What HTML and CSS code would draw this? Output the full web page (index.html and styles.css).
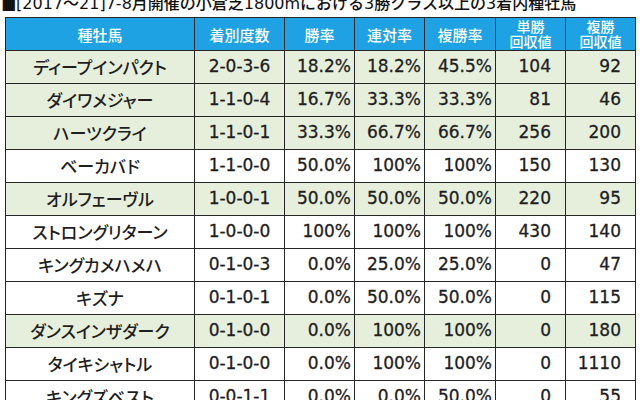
FILE: index.html
```html
<!DOCTYPE html>
<html lang="ja">
<head>
<meta charset="utf-8">
<link rel="stylesheet" href="styles.css">
</head>
<body>
<div class="title">■[2017～21]7-8月開催の小倉芝1800mにおける3勝クラス以上の3着内種牡馬</div>
<table class="stats">
  <colgroup>
    <col class="c-name"><col class="c-rec"><col class="c-rate"><col class="c-rate"><col class="c-rate3"><col class="c-ret"><col class="c-ret2">
  </colgroup>
  <thead>
    <tr>
      <th>種牡馬</th><th>着別度数</th><th>勝率</th><th>連対率</th><th>複勝率</th><th class="two">単勝<br>回収値</th><th class="two">複勝<br>回収値</th>
    </tr>
  </thead>
  <tbody>
    <tr class="hl"><td class="name">ディープインパクト</td><td class="rec">2-0-3-6</td><td>18.2%</td><td>18.2%</td><td>45.5%</td><td class="ret">104</td><td class="ret">92</td></tr>
    <tr class="hl"><td class="name">ダイワメジャー</td><td class="rec">1-1-0-4</td><td>16.7%</td><td>33.3%</td><td>33.3%</td><td class="ret">81</td><td class="ret">46</td></tr>
    <tr class="hl"><td class="name">ハーツクライ</td><td class="rec">1-1-0-1</td><td>33.3%</td><td>66.7%</td><td>66.7%</td><td class="ret">256</td><td class="ret">200</td></tr>
    <tr><td class="name">ベーカバド</td><td class="rec">1-1-0-0</td><td>50.0%</td><td>100%</td><td>100%</td><td class="ret">150</td><td class="ret">130</td></tr>
    <tr class="hl"><td class="name">オルフェーヴル</td><td class="rec">1-0-0-1</td><td>50.0%</td><td>50.0%</td><td>50.0%</td><td class="ret">220</td><td class="ret">95</td></tr>
    <tr><td class="name">ストロングリターン</td><td class="rec">1-0-0-0</td><td>100%</td><td>100%</td><td>100%</td><td class="ret">430</td><td class="ret">140</td></tr>
    <tr><td class="name">キングカメハメハ</td><td class="rec">0-1-0-3</td><td>0.0%</td><td>25.0%</td><td>25.0%</td><td class="ret">0</td><td class="ret">47</td></tr>
    <tr><td class="name">キズナ</td><td class="rec">0-1-0-1</td><td>0.0%</td><td>50.0%</td><td>50.0%</td><td class="ret">0</td><td class="ret">115</td></tr>
    <tr class="hl"><td class="name">ダンスインザダーク</td><td class="rec">0-1-0-0</td><td>0.0%</td><td>100%</td><td>100%</td><td class="ret">0</td><td class="ret">180</td></tr>
    <tr><td class="name">タイキシャトル</td><td class="rec">0-1-0-0</td><td>0.0%</td><td>100%</td><td>100%</td><td class="ret">0</td><td class="ret">1110</td></tr>
    <tr><td class="name">キングズベスト</td><td class="rec">0-0-1-1</td><td>0.0%</td><td>0.0%</td><td>50.0%</td><td class="ret">0</td><td class="ret">55</td></tr>
  </tbody>
</table>
</body>
</html>
```
FILE: styles.css
```css
html, body {
  margin: 0;
  padding: 0;
  background: #ffffff;
}
body {
  font-family: "DejaVu Sans", "Noto Sans CJK JP", sans-serif;
  color: #1e1e1e;
  overflow: hidden;
}
.title {
  height: 17px;
  line-height: 17px;
  font-size: 16px;
  font-weight: 500;
  margin-top: -5px;
  margin-bottom: 5px;
  padding-left: 1px;
  white-space: nowrap;
  color: #111;
}
.stats {
  margin-left: 5px;
  border-collapse: collapse;
  table-layout: fixed;
  width: 630px;
}
.c-name { width: 189px; }
.c-rec { width: 90px; }
.c-rate { width: 70px; }
.c-rate3 { width: 71px; }
.c-ret { width: 70px; }
.c-ret2 { width: 70px; }
.stats th, .stats td {
  border: 1px solid #262626;
  height: 33px;
  padding: 0;
  box-sizing: border-box;
  white-space: nowrap;
}
.stats th {
  font-family: "Noto Sans CJK JP", sans-serif;
  background: #1ea2e3;
  color: #ffffff;
  font-size: 15px;
  font-weight: 500;
  text-align: center;
  line-height: 15px;
  font-feature-settings: "palt";
}
.stats th.two {
  font-size: 14px;
  line-height: 15px;
}
.stats td {
  font-size: 17px;
  text-align: right;
  padding-right: 3px;
  padding-bottom: 2px;
  -webkit-text-stroke: 0.3px #1e1e1e;
}
.stats td.name {
  font-family: "Noto Sans CJK JP", sans-serif;
  font-weight: 500;
  font-feature-settings: "palt";
  -webkit-text-stroke: 0;
}
.stats td.name, .stats td.rec {
  text-align: center;
  padding-right: 0;
}
.stats td.ret {
  padding-right: 14px;
}
.stats tr.hl td {
  background: #e6efdc;
}
```
